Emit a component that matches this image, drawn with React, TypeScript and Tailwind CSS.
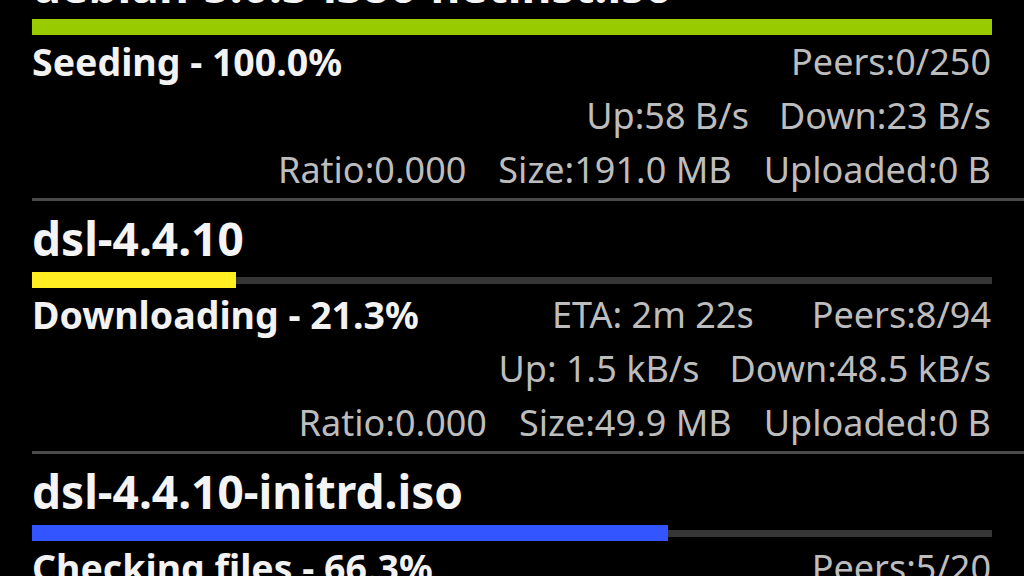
import React from "react";

type Item = {
  name: string;
  color: string;
  pct: number;
  status: string;
  eta?: string;
  peers: string;
  up: string;
  down: string;
  ratio: string;
  size: string;
  uploaded: string;
};

const items: Item[] = [
  {
    name: "debian-5.0.3-i386-netinst.iso",
    color: "#99cc00",
    pct: 100,
    status: "Seeding - 100.0%",
    peers: "Peers:0/250",
    up: "Up:58 B/s",
    down: "Down:23 B/s",
    ratio: "Ratio:0.000",
    size: "Size:191.0 MB",
    uploaded: "Uploaded:0 B",
  },
  {
    name: "dsl-4.4.10",
    color: "#ffee22",
    pct: 21.3,
    status: "Downloading - 21.3%",
    eta: "ETA: 2m 22s",
    peers: "Peers:8/94",
    up: "Up: 1.5 kB/s",
    down: "Down:48.5 kB/s",
    ratio: "Ratio:0.000",
    size: "Size:49.9 MB",
    uploaded: "Uploaded:0 B",
  },
  {
    name: "dsl-4.4.10-initrd.iso",
    color: "#3355ff",
    pct: 66.3,
    status: "Checking files - 66.3%",
    peers: "Peers:5/20",
    up: "Up:0 B/s",
    down: "Down:0 B/s",
    ratio: "Ratio:0.000",
    size: "Size:9.6 MB",
    uploaded: "Uploaded:0 B",
  },
];

function Row({ item }: { item: Item }) {
  return (
    <div className="flex flex-col">
      <div className="pt-[3px] leading-[68px] h-[71px] text-[46px] font-bold text-[#f4f4f4] whitespace-nowrap">
        {item.name}
      </div>
      <div className="relative h-[16px] mr-[32px]">
        <div className="absolute left-0 right-0 top-[5px] h-[7px] bg-[#363636]" />
        <div
          className="absolute left-0 top-0 h-[16px]"
          style={{ width: `${item.pct}%`, backgroundColor: item.color }}
        />
      </div>
      <div className="flex flex-col text-[36px] leading-[54px] text-[#bdbdbd] pr-[33px] whitespace-nowrap">
        <div className="flex">
          <span className="font-bold text-[37.5px] text-[#f2f2f2] flex-1">{item.status}</span>
          {item.eta && <span className="mr-[58px]">{item.eta}</span>}
          <span>{item.peers}</span>
        </div>
        <div className="flex justify-end gap-[30px]">
          <span>{item.up}</span>
          <span>{item.down}</span>
        </div>
        <div className="flex justify-end gap-[32px]">
          <span>{item.ratio}</span>
          <span>{item.size}</span>
          <span>{item.uploaded}</span>
        </div>
      </div>
      <div className="mt-[1px] h-[3px] bg-[#4a4a4a]" />
    </div>
  );
}

export default function App() {
  return (
    <div
      className="w-[1024px] h-[576px] overflow-hidden bg-black"
      style={{ fontFamily: '"Noto Sans", "Open Sans", sans-serif' }}
    >
      <div className="mt-[-52px] pl-[32px]">
        {items.map((it) => (
          <Row key={it.name} item={it} />
        ))}
      </div>
    </div>
  );
}
